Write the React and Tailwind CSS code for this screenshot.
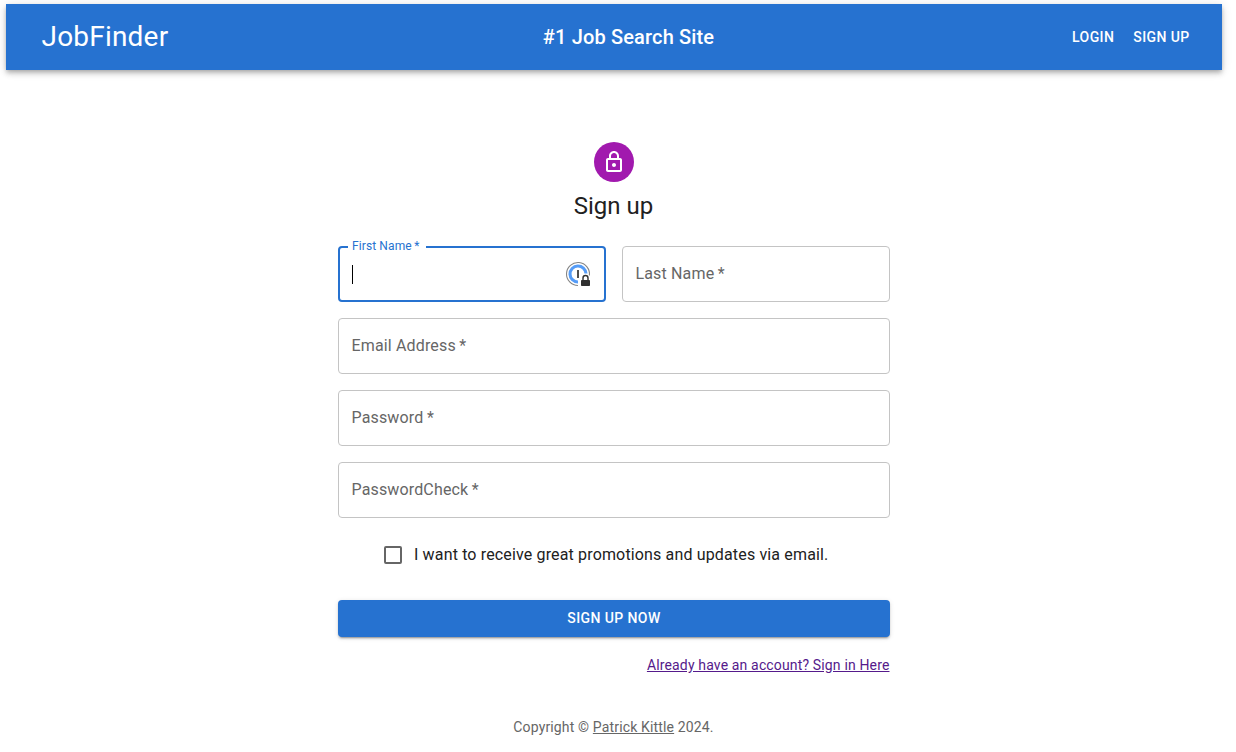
const BUTTON_TEXT = "text-[14px] leading-[24.5px] font-medium tracking-[0.4px] uppercase";

function Header() {
  return (
    <header className="mt-1 mr-[14px] ml-1.5 flex h-[66px] items-center justify-between bg-[#2672d0] pr-[32.4px] pl-[35.500px] text-white shadow-[0_2px_4px_-1px_rgba(0,0,0,0.2),0_4px_5px_0_rgba(0,0,0,0.14),0_1px_10px_0_rgba(0,0,0,0.12)]">
      <a className="w-[126px] text-[28px] leading-[42px] tracking-[0.2px] whitespace-nowrap">JobFinder</a>
      <div className="ml-[17.5px] text-[20px] leading-8 font-medium tracking-[0.15px] whitespace-nowrap">#1 Job Search Site</div>
      <nav className="flex gap-[19px]">
        <a className={BUTTON_TEXT}>Login</a>
        <a className={BUTTON_TEXT}>Sign up</a>
      </nav>
    </header>
  );
}

function LockOutlined() {
  return (
    <svg viewBox="0 0 24 24" className="size-6 fill-white">
      <path d="M12 17c1.1 0 2-.9 2-2s-.9-2-2-2-2 .9-2 2 .9 2 2 2zm6-9h-1V6c0-2.76-2.24-5-5-5S7 3.24 7 6v2H6c-1.1 0-2 .9-2 2v10c0 1.1.9 2 2 2h12c1.1 0 2-.9 2-2V10c0-1.1-.9-2-2-2zM9 6c0-1.66 1.34-3 3-3s3 1.34 3 3v2H9V6zm9 14H6V10h12v10z" />
    </svg>
  );
}

function PasswordManagerIcon() {
  return (
    <svg viewBox="0 0 26 26" className="size-[26px]" fill="none">
      <path d="M24.400 14.500A11.500 11.500 0 1 0 13 24.500" stroke="#858585" strokeWidth="1.100" />
      <path d="M21 12.500A8 8 0 1 0 13 21" stroke="#559cf7" strokeWidth="3.100" />
      <rect x="12" y="9" width="2" height="8" fill="#505050" />
      <rect x="16" y="19" width="9" height="6" rx="0.800" fill="#303030" />
      <path d="M18 19.500v-2.500a2.500 2.500 0 0 1 5 0v2.500" stroke="#303030" strokeWidth="1.400" />
    </svg>
  );
}

function FocusedField({ label }) {
  return (
    <div className="relative h-14">
      <div className="flex h-full items-center justify-between rounded-[4px] border-2 border-[#2672d0] pr-[13px] pl-3">
        <span className="h-[19px] w-px bg-black" />
        <PasswordManagerIcon />
      </div>
      <span className="absolute -top-2 left-2.5 w-[78px] bg-white pl-1 text-[12px] leading-[17px] tracking-[0.11px] whitespace-nowrap text-[#2672d0]">
        {label}<span className="ml-[2.5px]">*</span>
      </span>
    </div>
  );
}

function Field({ label }) {
  return (
    <div className="flex h-14 items-center rounded-[4px] border border-[#c4c4c4] px-[12.5px] pb-px text-[16px] leading-[23px] tracking-[0.15px] text-[#666]">
      {label}<span className="ml-[3.5px]">*</span>
    </div>
  );
}

export default function App() {
  return (
    <div className="flow-root h-[752px] overflow-hidden bg-white font-[Roboto,sans-serif] text-[#212121]">
      <Header />
      <main className="mr-2 flex flex-col items-center pt-[72px]">
        <div className="flex size-10 items-center justify-center rounded-full bg-[#a119ae]">
          <LockOutlined />
        </div>
        <h1 className="mt-2 mr-px text-[24px] leading-8">Sign up</h1>
        <form className="mt-6 flex w-[552px] flex-col">
          <div className="grid grid-cols-2 gap-4">
            <FocusedField label="First Name" />
            <Field label="Last Name" />
            <div className="col-span-2"><Field label="Email Address" /></div>
            <div className="col-span-2"><Field label="Password" /></div>
            <div className="col-span-2"><Field label="PasswordCheck" /></div>
          </div>
          <div className="mt-[25px] ml-[46px] flex h-6 items-center gap-3">
            <span className="size-[18px] rounded-[2px] border-2 border-[#666]" />
            <span className="text-[16px] leading-6 tracking-[0.15px] whitespace-nowrap">I want to receive great promotions and updates via email.</span>
          </div>
          <button type="button" className={`mt-[33px] h-[37px] rounded-[4px] bg-[#2672d0] text-white shadow-[0_3px_1px_-2px_rgba(0,0,0,0.2),0_2px_2px_0_rgba(0,0,0,0.14),0_1px_5px_0_rgba(0,0,0,0.12)] ${BUTTON_TEXT}`}>
            Sign up now
          </button>
          <a className="mt-[18px] mr-[0.5px] self-end text-[14px] leading-5 tracking-[0.15px] text-[#551a8b] underline">Already have an account? Sign in Here</a>
        </form>
        <footer className="mt-[42px] mr-px text-[14px] leading-5 tracking-[0.15px] text-[#666]">
          Copyright © <a className="underline">Patrick Kittle</a> 2024.
        </footer>
      </main>
    </div>
  );
}
